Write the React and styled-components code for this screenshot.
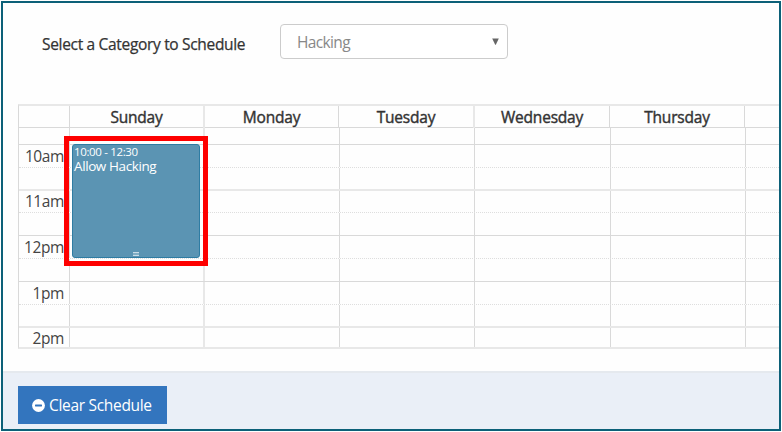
import React from "react";
import styled, { createGlobalStyle } from "styled-components";

const GlobalStyle = createGlobalStyle`
  *, *::before, *::after { box-sizing: border-box; }
  body {
    margin: 0;
    background: #fff;
    font-family: "Open Sans", "Noto Sans", sans-serif;
    color: #333;
    overflow: hidden;
  }
`;

const Frame = styled.main`
  width: 780px;
  height: 430px;
  margin: 1px;
  border: 2px solid #0c6078;
  background: #fefefe;
  display: flex;
  flex-direction: column;
  overflow: hidden;
`;

const Toolbar = styled.div`
  flex: none;
  height: 101px;
  display: flex;
  align-items: flex-start;
  padding: 21px 0 0 39px;
`;

const Label = styled.label`
  width: 238px;
  line-height: 40px;
  font-size: 15.5px;
  letter-spacing: -0.32px;
  white-space: nowrap;
  -webkit-text-stroke: 0.25px #333;
`;

const Select = styled.button`
  width: 228px;
  height: 35px;
  display: flex;
  align-items: center;
  justify-content: space-between;
  padding: 0 8px 0 16px;
  border: 1px solid #ccc;
  border-radius: 4px;
  background: #fff;
  color: #888;
  font: 400 15.5px/20px "Open Sans", sans-serif;
  letter-spacing: -0.65px;
`;

const Calendar = styled.section`
  flex: none;
  position: relative;
  margin-left: 15px;
  border-left: 1px solid #d9d9d9;
  border-top: 2px solid #e8e8e8;
  border-bottom: 2px solid #e8e8e8;
`;

const HeaderRow = styled.div`
  display: grid;
  grid-template-columns: 50px 134px 135px 135px 136px 135px 1fr;
  height: 22px;
  border-bottom: 1px solid #d9d9d9;
`;

const Cell = styled.div`
  border-left: ${(p) => (p.$wide ? "2px solid #e8e8e8" : "1px solid #d9d9d9")};
`;

const HeaderCell = styled(Cell)`
  text-align: center;
  font-size: 15.5px;
  line-height: 22px;
  letter-spacing: -0.2px;
  -webkit-text-stroke: 0.4px #333;
`;

const Corner = styled.div``;

const lineStyles = {
  none: "0 solid transparent",
  solid: "1px solid #d9d9d9",
  wide: "2px solid #e8e8e8",
  dotted: "1px dotted #dedede",
};

const SlotRow = styled.div`
  display: grid;
  grid-template-columns: 50px 134px 136px 135px 136px 135px 1fr;
  height: ${(p) => p.$height}px;
  border-top: ${(p) => lineStyles[p.$line]};
`;

const Time = styled.div`
  padding-right: 5px;
  text-align: right;
  font-size: 15.5px;
  letter-spacing: -0.4px;
  line-height: ${(p) => (p.$raised ? 21 : 22)}px;
  height: 19px;
  color: #444;
  white-space: nowrap;
`;

const Highlight = styled.div`
  position: absolute;
  left: 45px;
  top: 30px;
  width: 144px;
  height: 130px;
  border: 5px solid #fe0000;
  padding: 3px;
`;

const Event = styled.article`
  position: relative;
  width: 128px;
  height: 114px;
  padding: 0 1px;
  border: 1px solid #2e7ca3;
  border-radius: 3px;
  background: #5b94b3;
  color: #fff;
  white-space: nowrap;
`;

const EventTime = styled.div`
  font-size: 11.5px;
  letter-spacing: -0.35px;
  line-height: 13px;
`;

const EventTitle = styled.div`
  font-size: 13.5px;
  letter-spacing: -0.4px;
  line-height: 16px;
`;

const Grip = styled.span`
  position: absolute;
  left: 60px;
  bottom: 1px;
  width: 6px;
  height: 4px;
  border: solid #c8dce7;
  border-width: 1px 0;
  background: #80adc4;
`;

const Footer = styled.footer`
  flex: 1;
  margin-top: 22px;
  padding: 13px 15px;
  border-top: 2px solid #e5e9ee;
  background: #eaeff7;
`;

const ClearButton = styled.button`
  width: 149px;
  height: 38px;
  display: flex;
  align-items: center;
  padding: 0 0 0 14px;
  gap: 4px;
  border: 0;
  background: #3375be;
  color: #fff;
  font: 400 15.5px/22px "Open Sans", sans-serif;
  letter-spacing: -0.31px;
  white-space: nowrap;
`;

const days = [
  { name: "Sunday" },
  { name: "Monday", wide: true },
  { name: "Tuesday" },
  { name: "Wednesday", wide: true },
  { name: "Thursday" },
  { name: "" },
];

const slots = [
  { line: "none", height: 16 },
  { line: "solid", height: 23, time: "10am" },
  { line: "dotted", height: 22 },
  { line: "wide", height: 23, time: "11am" },
  { line: "dotted", height: 23 },
  { line: "solid", height: 23, time: "12pm" },
  { line: "dotted", height: 23 },
  { line: "solid", height: 23, time: "1pm" },
  { line: "dotted", height: 22 },
  { line: "wide", height: 21, time: "2pm" },
];

function Arrow() {
  return (
    <svg width="7" height="7" viewBox="0 0 7 7" aria-hidden="true">
      <path d="M0.2 0.5H6.8L3.8 6.7H3.2Z" fill="#666" />
    </svg>
  );
}

function MinusCircle() {
  return (
    <svg width="13" height="13" viewBox="0 0 13 13" aria-hidden="true">
      <circle cx="6.5" cy="6.5" r="6.4" fill="#fff" />
      <rect x="3" y="5.5" width="7" height="2" rx="0.4" fill="#3375be" />
    </svg>
  );
}

export default function App() {
  return (
    <>
      <GlobalStyle />
      <Frame>
        <Toolbar>
          <Label>Select a Category to Schedule</Label>
          <Select>
            Hacking
            <Arrow />
          </Select>
        </Toolbar>
        <Calendar>
          <HeaderRow>
            <Corner />
            {days.map((d, i) => (
              <HeaderCell key={i} $wide={d.wide}>{d.name}</HeaderCell>
            ))}
          </HeaderRow>
          {slots.map((s, i) => (
            <SlotRow key={i} $line={s.line} $height={s.height}>
              <Time $raised={s.line === "wide"}>{s.time}</Time>
              {days.map((d, j) => (
                <Cell key={j} $wide={d.name === "Monday"} />
              ))}
            </SlotRow>
          ))}
          <Highlight>
            <Event>
              <EventTime>10:00 - 12:30</EventTime>
              <EventTitle>Allow Hacking</EventTitle>
              <Grip />
            </Event>
          </Highlight>
        </Calendar>
        <Footer>
          <ClearButton>
            <MinusCircle />
            Clear Schedule
          </ClearButton>
        </Footer>
      </Frame>
    </>
  );
}
